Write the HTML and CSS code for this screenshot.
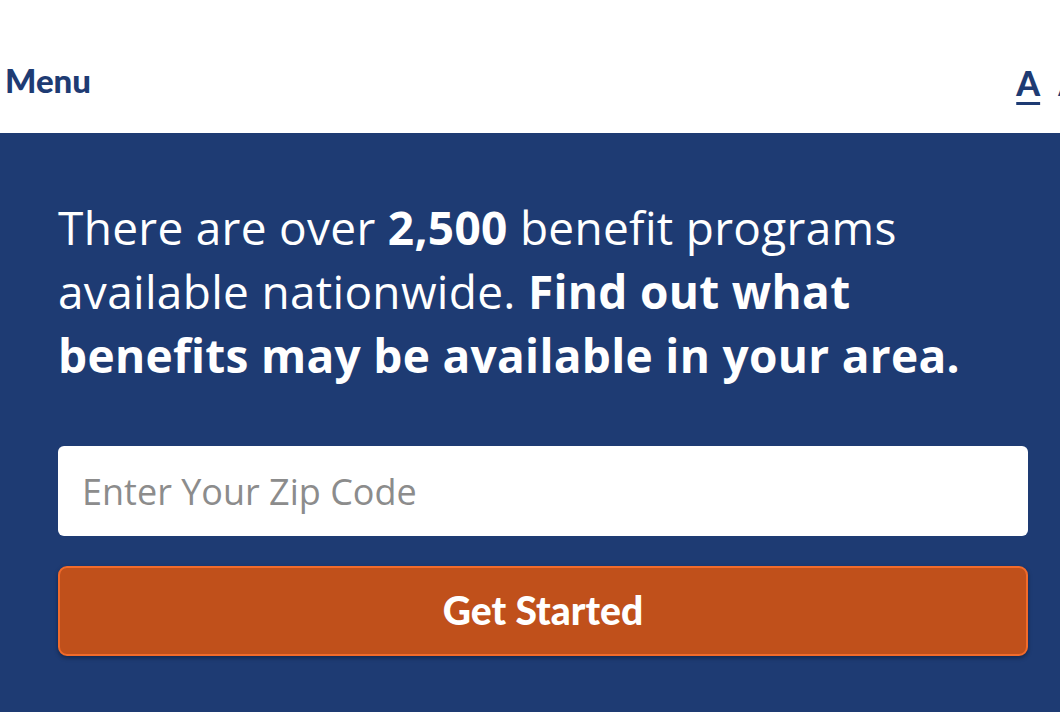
FILE: index.html
```html
<!DOCTYPE html>
<html lang="en">
<head>
<meta charset="utf-8">
<title>Benefits</title>
<link rel="stylesheet" href="styles.css">
</head>
<body>
<header class="topbar">
  <a class="menu" href="#">Menu</a>
  <div class="sizes">
    <a class="size size-active" href="#">A</a>
    <a class="size" href="#">A</a>
  </div>
</header>
<main class="hero">
  <p class="lead">There are over <strong>2,500</strong> benefit programs available nationwide. <strong>Find out what benefits may be available in your area.</strong></p>
  <form class="zip-form">
    <input class="zip" type="text" placeholder="Enter Your Zip Code">
    <button class="start" type="button">Get Started</button>
  </form>
</main>
</body>
</html>
```
FILE: styles.css
```css
html, body {
  margin: 0;
  padding: 0;
}
body {
  width: 1060px;
  height: 712px;
  overflow: hidden;
  background: #1e3b73;
  font-family: "Open Sans", "Liberation Sans", sans-serif;
}
.topbar {
  height: 133px;
  background: #ffffff;
  display: flex;
  align-items: center;
  justify-content: space-between;
  padding: 30px 0 0 5px;
  box-sizing: border-box;
  white-space: nowrap;
}
.menu {
  font-family: "Lato", "Open Sans", sans-serif;
  font-weight: 900;
  font-size: 33px;
  color: #1e3b73;
  text-decoration: none;
  margin-top: -3px;
}
.sizes {
  display: flex;
  gap: 18px;
  margin-right: -22px;
  margin-top: 2px;
}
.size {
  font-family: "Lato", "Open Sans", sans-serif;
  font-weight: 900;
  font-size: 34px;
  color: #1e3b73;
  text-decoration: none;
}
.size-active {
  text-decoration: underline;
  text-decoration-thickness: 3px;
  text-underline-offset: 6px;
}
.hero {
  padding: 62px 32px 0 58px;
}
.lead {
  margin: 0;
  color: #ffffff;
  font-size: 46px;
  line-height: 64px;
  font-weight: 400;
  letter-spacing: 0.3px;
  max-width: 960px;
}
.lead strong {
  font-weight: 700;
}
.zip-form {
  margin-top: 59px;
  display: flex;
  flex-direction: column;
  gap: 30px;
}
.zip {
  height: 90px;
  box-sizing: border-box;
  border: none;
  border-radius: 6px;
  background: #ffffff;
  padding: 0 24px;
  font-family: "Open Sans", sans-serif;
  font-size: 36px;
  color: #333;
  outline: none;
}
.zip::placeholder {
  color: #8c8c8c;
}
.start {
  height: 90px;
  box-sizing: border-box;
  border: 2px solid #f26b2b;
  border-radius: 9px;
  background: #c0501b;
  color: #ffffff;
  font-family: "Lato", "Open Sans", sans-serif;
  font-weight: 900;
  font-size: 39px;
  box-shadow: 0 2px 4px rgba(0, 0, 0, 0.35);
  cursor: pointer;
  padding-bottom: 4px;
}
```
